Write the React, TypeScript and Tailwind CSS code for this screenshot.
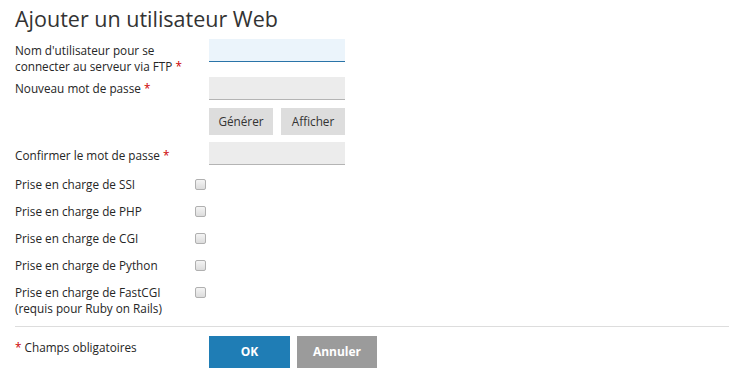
import React from "react";

function Req() {
  return <span className="text-[#cc0000]">*</span>;
}

function CheckRow({ label, sub }: { label: string; sub?: string }) {
  return (
    <div className={`flex ${sub ? "h-[32px]" : "h-[27px]"}`}>
      <div className="w-[180px] text-[11.75px] leading-[16px]">
        {label}
        {sub && <div>{sub}</div>}
      </div>
      <span className="mt-[3px] block h-[11px] w-[11px] rounded-[2px] border border-[#b0b0b0] bg-gradient-to-b from-[#f4f4f4] to-[#dcdcdc]" />
    </div>
  );
}

export default function App() {
  return (
    <main className="h-[388px] w-[729px] bg-white pl-[15px] text-[#262626] [font-family:'Open_Sans',sans-serif]">
      <h1 className="pt-[4px] text-[21.5px] leading-[30px] text-[#333]">
        Ajouter un utilisateur Web
      </h1>

      <div className="mt-[5px] flex h-[38px]">
        <label className="mt-[3px] w-[194px] text-[11.75px] leading-[16px]">
          Nom d'utilisateur pour se
          <br />
          connecter au serveur via FTP <Req />
        </label>
        <input className="h-[23px] w-[136px] border-b border-[#2a74a8] bg-[#ebf4fb] outline-none" />
      </div>

      <div className="flex h-[31px]">
        <label className="mt-[3px] w-[194px] text-[11.75px] leading-[16px]">
          Nouveau mot de passe <Req />
        </label>
        <input
          type="password"
          className="h-[23px] w-[136px] border-b border-[#b4b4b4] bg-[#ececec] outline-none"
        />
      </div>

      <div className="flex gap-[8px] pl-[194px]">
        <button className="h-[27px] w-[64px] bg-[#dddddd] text-[11.75px] text-[#333]">
          Générer
        </button>
        <button className="h-[27px] w-[64px] bg-[#dddddd] text-[11.75px] text-[#333]">
          Afficher
        </button>
      </div>

      <div className="mt-[7px] flex h-[34px]">
        <label className="mt-[5px] w-[194px] text-[11.75px] leading-[16px]">
          Confirmer le mot de passe <Req />
        </label>
        <input
          type="password"
          className="h-[23px] w-[136px] border-b border-[#b4b4b4] bg-[#ececec] outline-none"
        />
      </div>

      <div className="flex flex-col">
        <CheckRow label="Prise en charge de SSI" />
        <CheckRow label="Prise en charge de PHP" />
        <CheckRow label="Prise en charge de CGI" />
        <CheckRow label="Prise en charge de Python" />
        <CheckRow
          label="Prise en charge de FastCGI"
          sub="(requis pour Ruby on Rails)"
        />
      </div>

      <div className="mt-[10px] border-t border-[#dddddd]" />

      <div className="mt-[9px] flex">
        <p className="mt-[3px] w-[194px] text-[11.75px] leading-[16px]">
          <Req /> Champs obligatoires
        </p>
        <div className="flex gap-[7px]">
          <button className="h-[32px] w-[81px] bg-[#1f7db5] text-[12px] font-bold text-white">
            OK
          </button>
          <button className="h-[32px] w-[80px] bg-[#9b9b9b] text-[12px] font-bold text-white">
            Annuler
          </button>
        </div>
      </div>
    </main>
  );
}
